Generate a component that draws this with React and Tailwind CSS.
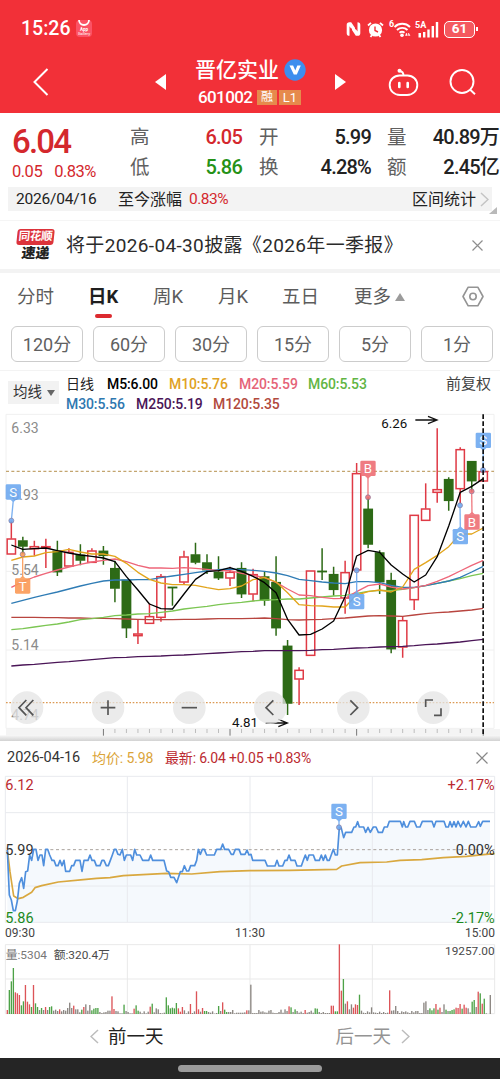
const CANDLES = [
    // [color, bodyTop, bodyBottom, high, low]
    ["r", 386, 433, 332, 433], ["g", 392, 409, 380, 432], ["r", 409, 417, 392, 437], ["r", 409, 414, 386, 474],
    ["g", 423, 486, 392, 498], ["r", 426, 469, 415, 469], ["g", 435, 451, 403, 466], ["r", 422, 458, 415, 458],
    ["g", 423, 437, 408, 464], ["g", 475, 535, 452, 577], ["g", 510, 654, 510, 684], ["r", 671, 678, 629, 702],
    ["r", 619, 641, 580, 641], ["r", 499, 623, 492, 635], ["g", 531, 533, 531, 587], ["r", 440, 517, 422, 522],
    ["g", 434, 457, 398, 463], ["g", 458, 480, 433, 492], ["g", 486, 504, 439, 510], ["r", 486, 505, 470, 528],
    ["g", 475, 552, 457, 564], ["r", 493, 553, 476, 574], ["g", 500, 571, 485, 587], ["g", 517, 654, 439, 677],
    ["g", 708, 880, 690, 915], ["r", 780, 808, 772, 885], ["r", 482, 737, 482, 737], ["g", 483, 486, 415, 510],
    ["g", 493, 539, 470, 557], ["r", 487, 565, 452, 611], ["r", 190, 481, 159, 481], ["g", 297, 403, 262, 415],
    ["g", 428, 516, 421, 552], ["g", 511, 717, 488, 730], ["r", 631, 712, 618, 743], ["r", 315, 570, 315, 600],
    ["r", 296, 332, 220, 332], ["r", 238, 248, 55, 278], ["g", 208, 272, 202, 302], ["r", 118, 237, 112, 280],
    ["g", 154, 213, 154, 245], ["r", 184, 214, 177, 214],
];

const AVERAGES = [
    { color: "#4a1557", ys: [768, 765, 763, 760, 757, 755, 752, 749, 746, 743, 742, 740, 739, 738, 736, 735, 733, 731, 729, 727, 725, 724, 722, 722, 722, 722, 721, 719, 718, 716, 714, 713, 711, 710, 709, 707, 704, 702, 699, 696, 692, 688] },
    { color: "#b8453f", ys: [622, 622, 622, 623, 623, 624, 624, 625, 625, 626, 627, 628, 629, 629, 629, 628, 628, 627, 626, 626, 626, 625, 624, 626, 629, 630, 629, 628, 626, 624, 621, 618, 617, 618, 619, 615, 611, 608, 606, 603, 600, 595] },
    { color: "#7cc653", ys: [659, 656, 651, 646, 642, 636, 629, 626, 622, 617, 615, 612, 611, 607, 603, 597, 593, 589, 584, 580, 577, 573, 570, 569, 567, 567, 564, 561, 558, 556, 550, 544, 541, 542, 538, 533, 527, 520, 513, 506, 497, 490] },
    { color: "#2f7cb5", ys: [580, 571, 562, 554, 546, 537, 528, 520, 513, 510, 510, 509, 509, 503, 498, 493, 488, 483, 479, 477, 479, 481, 484, 489, 497, 508, 512, 516, 519, 521, 515, 515, 518, 526, 532, 532, 527, 520, 513, 502, 486, 469] },
    { color: "#ee6679", ys: [532, 515, 501, 490, 480, 471, 463, 456, 451, 447, 455, 466, 474, 474, 475, 473, 475, 478, 482, 482, 490, 496, 503, 517, 537, 555, 557, 562, 566, 565, 545, 527, 522, 531, 537, 533, 526, 514, 500, 483, 466, 451] },
    { color: "#e2a51c", ys: [451, 441, 438, 428, 425, 418, 426, 432, 432, 439, 460, 487, 508, 519, 524, 524, 526, 533, 539, 536, 528, 509, 502, 516, 548, 584, 587, 588, 591, 591, 555, 545, 540, 546, 531, 478, 458, 436, 410, 372, 372, 354] },
    { color: "#000000", ys: [405, 418, 416, 414, 422, 429, 435, 439, 444, 455, 500, 540, 582, 596, 597, 552, 508, 485, 482, 473, 484, 499, 518, 548, 628, 675, 673, 657, 633, 560, 438, 421, 427, 465, 492, 516, 495, 440, 348, 247, 229, 206] },
];

const MARKERS = [
    { label: "S", color: "#6ea9f0", x: 40, y: 246, dotX: 34, dotY: 332 },
    { label: "T", color: "#fb9a56", x: 68, y: 528, dotX: 68, dotY: 433 },
    { label: "B", color: "#ee6e75", x: 1104, y: 175, dotX: 1104, dotY: 262 },
    { label: "S", color: "#6ea9f0", x: 1070, y: 575, dotX: 1070, dotY: 481 },
    { label: "S", color: "#6ea9f0", x: 1381, y: 380, dotX: 1380, dotY: 286 },
    { label: "B", color: "#ee6e75", x: 1416, y: 336, dotX: 1415, dotY: 244 },
    { label: "S", color: "#6ea9f0", x: 1450, y: 91, dotX: 1449, dotY: 180 },
];

const PRICE =
    "22,345 28,480 34,495 40,527 46,527 52,498 58,445 65,428 71,460 77,410 83,408 89,360 95,376 101,343 108,343 114,376 120,360 126,360 131,392 137,343 143,343 149,360 156,376 162,376 168,392 174,392 180,376 186,392 192,376 197,409 209,409 215,392 221,392 227,376 240,376 246,409 252,376 264,376 270,360 276,376 283,376 289,392 300,392 306,376 312,376 319,392 325,392 331,376 337,360 343,343 348,343 354,358 360,360 367,343 373,376 379,360 392,360 398,376 404,343 410,360 420,360 428,376 446,376 452,360 458,376 492,376 500,408 506,410 512,427 522,427 530,443 541,410 547,410 553,392 560,408 566,408 572,392 584,392 590,376 595,343 601,358 607,343 613,343 620,360 643,360 650,343 662,343 668,327 674,343 686,343 694,358 700,358 706,343 717,343 723,358 735,358 741,345 747,360 753,358 758,376 795,376 802,393 825,393 831,376 837,393 848,393 855,376 861,376 867,360 873,376 885,376 891,393 904,393 910,376 916,360 922,376 927,360 940,360 946,376 958,376 964,360 970,376 976,360 982,376 988,376 1000,343 1006,360 1012,360 1018,277 1024,280 1031,308 1037,292 1055,292 1062,276 1067,276 1073,260 1078,276 1091,276 1097,292 1104,277 1111,292 1120,276 1128,276 1135,292 1147,292 1153,276 1162,276 1168,259 1201,259 1207,276 1211,260 1217,276 1223,276 1230,259 1243,259 1250,276 1260,276 1267,259 1296,259 1302,276 1308,259 1332,259 1338,276 1345,276 1350,260 1356,276 1362,260 1368,276 1374,259 1382,276 1390,259 1398,276 1405,259 1412,276 1428,276 1436,260 1441,274 1448,259 1470,259";

const AVG_PRICE =
    "22,345 30,410 41,483 55,491 70,487 95,472 105,458 125,452 175,441 250,434 290,430 330,428 370,422 500,415 575,417 660,410 750,407 870,406 1010,403 1025,393 1080,383 1160,381 1200,376 1265,374 1330,368 1400,364 1450,359 1484,356";

const VOLUME = (
    "r12 g72 g98 g138 r65 r62 r57 g26 g38 r87 r37 r29 g21 r87 g32 g21 n12 g18 n12 r21 n12 g21 g23 n10 n13 n9 r14 n8 n12 n10 " +
    "n18 n34 n18 r25 n14 n14 n5 g13 r21 n29 n10 n27 g11 g16 g18 g18 n6 n3 n5 n6 n10 n10 r53 r15 n9 n8 n2 n2 g28 n9 " +
    "n6 n2 n2 r16 g26 g10 n7 n2 n8 n2 n7 r22 g31 n5 n17 n14 n3 n2 n4 g50 g26 g17 g19 g17 g33 r17 r7 r21 n11 n2 " +
    "n8 r30 n3 n8 r68 r14 n7 r18 g9 g9 n6 n4 n8 n1 n3 g24 n9 r35 g13 g6 n6 n6 n12 n2 n4 n4 n4 n4 n5 r11 " +
    "n11 n88 n3 n3 n3 n12 n7 n8 n5 n4 n10 n12 n4 n3 n3 n6 n13 n4 n14 n9 r23 g20 n6 g14 n9 n4 n7 n3 r12 n4 " +
    "n6 n10 n4 g17 g16 n6 n3 n6 n3 n3 n3 r25 r25 g8 g8 r209 r70 g105 n31 r38 n14 n29 r19 r29 r27 g58 n10 n4 n3 n8 " +
    "n5 n20 n5 n4 n3 n7 n3 n6 n3 n4 r71 n10 n11 n24 n9 n3 n8 n6 n8 n5 n3 n9 n5 n9 n9 n3 n3 n34 n38 n12 " +
    "g17 g11 g17 r30 g13 r19 n6 n29 g13 n9 g9 g12 g14 r19 r18 r30 g16 r28 r19 n17 n5 g37 g42 n21 r67 g62 r31 g46 n2 n0 n57"
).split(" ");

const VOLUME_COLORS = { r: "#dc5458", g: "#4da247", n: "#8a8580" };

const PERIODS = ["120分", "60分", "30分", "15分", "5分", "1分"];

const candleX = (i) => 34 + i * 34.53;

const StatusIcons = () => (
    <div className="flex items-center text-white">
        <svg width="15" height="16" viewBox="0 0 15 16">
            <path d="M3.500 1.200C1.600 1.200.7 2 .7 4v8.200c0 1.700.9 2.600 2.800 2.600V5.200l6.300 9.600h1.700c1.900 0 2.800-.9 2.800-2.600V4c0-2-.9-2.800-2.800-2.800v9.400L5.200 1.200z" fill="white" />
            <path d="M5.300 15V7.500M9.700 1v7.300" stroke="#f23038" strokeWidth="1.300" />
        </svg>
        <svg className="ml-[6px]" width="17" height="17" viewBox="0 0 17 17" fill="none">
            <circle cx="8.500" cy="9" r="6.600" fill="white" />
            <path d="M1 4.500 4 1.800M16 4.500l-3-2.700M3.500 16l1.500-2M13.500 16 12 14" stroke="white" strokeWidth="1.800" />
            <path d="M8 5.500V9.500l3 1.500" stroke="#f23038" strokeWidth="1.400" />
        </svg>
        <div className="ml-[5px] flex">
            <span className="-mt-[2px] w-[5px] text-[9px] leading-[10px] font-bold">6</span>
            <svg width="17" height="17" viewBox="0 0 17 17" fill="none" stroke="white">
                <path d="M.5 6a11 11 0 0 1 15.500 0M3 9a7.500 7.500 0 0 1 10.500 0M5.500 11.800a4 4 0 0 1 5 0" strokeWidth="1.900" />
                <circle cx="8" cy="14.300" r="1.800" fill="white" stroke="none" />
                <path d="m12.500 12-1 2.500h1.800zM14.500 12v2.500h1.500z" fill="white" strokeWidth=".5" />
            </svg>
        </div>
        <div className="relative ml-1 h-[17px] w-[24px]">
            <span className="absolute -top-[1px] left-0 text-[9px] leading-[10px] font-bold">5A</span>
            <svg width="24" height="17" viewBox="0 0 24 17" fill="white">
                <path d="M3.500 12H6v4.500H3.500zM8 11h2.400v5.500H8zM12.300 8.500h2.400v8h-2.400zM16.600 5H19v11.500h-2.400zM20.800 1h2.400v15.500h-2.400z" />
            </svg>
        </div>
        <div className="ml-[5px] flex h-[17px] w-[31px] items-center justify-center rounded-[5px] border border-white bg-white/20 text-[13.500px] leading-none font-bold">
            61
        </div>
        <div className="ml-px h-1 w-[2px] bg-white" />
    </div>
);

const Header = () => (
    <header className="h-[113px] bg-[#f23038] text-white">
        <div className="flex h-[58px] items-center pr-[22px] pl-[21px]">
            <span className="text-[19.500px] leading-none font-medium">15:26</span>
            <svg className="-mt-[3px] ml-[6px]" width="16" height="18" viewBox="0 0 16 18" fill="none">
                <rect y="1" width="16" height="17" rx="4" fill="#fb5265" />
                <path d="M3 1a5 5 0 0 0 10 0" stroke="white" strokeWidth="1.800" />
                <text x="8" y="12" fontSize="4.500" fontWeight="700" fill="white" textAnchor="middle">App</text>
                <text x="8" y="16" fontSize="4" fill="white" textAnchor="middle">Gallery</text>
            </svg>
            <div className="ml-auto">
                <StatusIcons />
            </div>
        </div>
        <div className="flex h-[48px] items-center">
            <svg className="ml-[32px] shrink-0" width="17" height="28" viewBox="0 0 17 28" fill="none" stroke="white" strokeWidth="2">
                <path d="M15.500 1 2.500 14l13 13" />
            </svg>
            <svg className="ml-[106px] shrink-0" width="12" height="16" viewBox="0 0 12 16" fill="white">
                <path d="M11 0v16L0 8z" />
            </svg>
            <div className="ml-[28px] w-[112px] shrink-0">
                <div className="flex h-[30px] items-center whitespace-nowrap">
                    <span className="text-[21px] leading-none font-medium">晋亿实业</span>
                    <svg className="ml-[5px]" width="22" height="22" viewBox="0 0 22 22">
                        <circle cx="11" cy="11" r="10.700" fill="#3d8eee" />
                        <path d="M5.500 6.500h3.600l2.200 5 2-5h3.500l-4 9H9.800z" fill="white" />
                    </svg>
                </div>
                <div className="flex h-[24px] items-center pl-[3px]">
                    <span className="w-[55px] pt-px text-[17px] leading-none font-medium tracking-[-0.600px]">601002</span>
                    <span className="ml-[4px] flex h-[15px] w-[20px] items-center justify-center bg-[#e68a4c] text-[12px] leading-none">融</span>
                    <span className="ml-[2px] flex h-[15px] w-[22px] items-center justify-center bg-[#e68a4c] text-[13px] leading-none">L1</span>
                </div>
            </div>
            <svg className="ml-[28px] shrink-0" width="11" height="16" viewBox="0 0 11 16" fill="white">
                <path d="M0 0v16l11-8z" />
            </svg>
            <svg className="ml-[42px] shrink-0" width="31" height="29" viewBox="0 0 31 29" fill="none" stroke="white" strokeWidth="1.900">
                <path d="M11.500 7.500h8c5.500 0 9.800 4.300 9.800 9.500 0 5.800-4.300 10-10.300 10h-7C6 27 1.700 22.800 1.700 17c0-5.200 4.300-9.500 9.800-9.500z" />
                <path d="M15.500 7.500c0-3-1-4-3.500-4.500" />
                <circle cx="11.500" cy="2.800" r="2" fill="white" stroke="none" />
                <path d="M11.300 15v4M19.700 15v4" strokeWidth="2.600" strokeLinecap="round" />
            </svg>
            <svg className="ml-[30px] shrink-0" width="28" height="28" viewBox="0 0 28 28" fill="none" stroke="white" strokeWidth="1.900">
                <circle cx="13" cy="13.500" r="11.500" />
                <path d="m21 21.500 5 4.800" />
            </svg>
        </div>
    </header>
);

const Stat = ({ label, value, width, color = "text-[#222222]" }) => (
    <div className={`flex h-[30px] items-center justify-between ${width}`}>
        <span className="pt-[3px] text-[19.500px] leading-none text-[#606060]">{label}</span>
        <span className={`pt-px text-[20px] leading-none font-medium tracking-[-0.800px] whitespace-nowrap ${color}`}>{value}</span>
    </div>
);

const Quote = () => (
    <section className="flex h-[74px] pt-[8px]">
        <div className="w-[130px] pl-[12px] text-[#d4282d]">
            <div className="pt-[4px] text-[33px] leading-[34px] font-medium tracking-[-1.800px]">6.04</div>
            <div className="mt-[3px] flex gap-[12px] text-[16.500px] leading-[20px] tracking-[-0.500px]">
                <span>0.05</span>
                <span>0.83%</span>
            </div>
        </div>
        <div>
            <Stat label="高" value="6.05" width="w-[112px]" color="text-[#d4282d]" />
            <Stat label="低" value="5.86" width="w-[112px]" color="text-[#259217]" />
        </div>
        <div className="ml-[17px]">
            <Stat label="开" value="5.99" width="w-[112px]" />
            <Stat label="换" value="4.28%" width="w-[112px]" />
        </div>
        <div className="ml-[16px]">
            <Stat label="量" value="40.89万" width="w-[112px]" />
            <Stat label="额" value="2.45亿" width="w-[112px]" />
        </div>
    </section>
);

const RangeBar = () => (
    <section className="h-[33px] px-[8px]">
        <div className="flex h-[24px] items-center bg-[#f3f3f3] pl-[8px] text-[15.500px] leading-none text-[#222222]">
            <span className="w-[81px] pt-px tracking-[-0.200px]">2026/04/16</span>
            <span className="ml-[21px] pt-px text-[16px]">至今涨幅</span>
            <span className="ml-[7px] pt-px tracking-[-0.500px] text-[#d4282d]">0.83%</span>
            <span className="ml-auto pt-px text-[16px]">区间统计</span>
            <svg className="mr-[3px] ml-[4px]" width="9" height="15" viewBox="0 0 9 15" fill="none" stroke="#c4c4c4" strokeWidth="1.500">
                <path d="m1 1 7 6.500L1 14" />
            </svg>
        </div>
        <svg className="-mt-[4px] -mr-[5px] ml-auto" width="8" height="7" viewBox="0 0 8 7" fill="#b9b9b9">
            <path d="M8 0v7H0z" />
        </svg>
    </section>
);

const News = () => (
    <section className="h-[53px] border-t border-b-[4px] border-[#f5f5f5] border-b-[#f3f3f3]">
        <div className="flex h-[48px] items-center">
            <div className="ml-[17px] w-[37px] shrink-0 text-center font-bold whitespace-nowrap">
                <div className="h-[16px] -skew-x-6 rounded-[3px] bg-[#dc333b] text-[11.500px] leading-[15px] tracking-[-0.300px] text-white">同花顺</div>
                <div className="h-[17px] -skew-x-6 text-[14px] leading-[17px] font-black text-[#222222]">速递</div>
            </div>
            <span className="ml-[12px] text-[19px] leading-none tracking-[0.350px] whitespace-nowrap text-[#2b2b2b]">将于2026-04-30披露《2026年一季报》</span>
            <svg className="mr-[17px] ml-auto" width="11" height="11" viewBox="0 0 11 11" stroke="#8e8e8e" strokeWidth="1.200">
                <path d="m.5.5 10 10M10.500.5l-10 10" />
            </svg>
        </div>
    </section>
);

const Tabs = () => (
    <nav className="flex h-[53px] pt-[12px] text-[18.500px] leading-[24px] text-[#5c5c5c]">
        <span className="ml-[17px] w-[71px]">分时</span>
        <span className="w-[65px] font-bold text-[#1f1f1f]">
            日K
            <span className="mt-[5px] ml-[7px] block h-[4px] w-[17px] rounded-full bg-[#dc2a2f]" />
        </span>
        <span className="w-[65px]">周K</span>
        <span className="w-[64px]">月K</span>
        <span className="w-[72px]">五日</span>
        <span className="flex items-center self-start">
            更多
            <svg className="ml-[4px]" width="10" height="8" viewBox="0 0 10 8" fill="#9b9b9b">
                <path d="M5 0l5 8H0z" />
            </svg>
        </span>
        <svg className="mt-px mr-[16px] ml-auto" width="22" height="21" viewBox="0 0 22 21" fill="none" stroke="#949494" strokeWidth="1.600">
            <path d="M6.200 1.200h9.600L21 10.500l-5.200 9.300H6.200L1 10.500z" strokeLinejoin="round" />
            <circle cx="11" cy="10.500" r="3.200" />
        </svg>
    </nav>
);

const PeriodButtons = () => (
    <section className="flex h-[45px] justify-between border-b border-[#f3f3f3] pr-[7px] pl-[11px]">
        {PERIODS.map((period) => (
            <button key={period} className="h-[36px] w-[72px] rounded-[6px] border border-[#cccccc] pt-[2px] text-[18px] leading-none text-[#606060]">
                {period}
            </button>
        ))}
    </section>
);

const Legend = () => (
    <section className="flex h-[42px] text-[14px]">
        <div className="mt-[10px] ml-[8px] flex h-[23px] w-[51px] items-center gap-[5px] bg-[#f2f2f2] pl-[5px] text-[14.500px] leading-none text-[#333333]">
            <span className="pt-[2px] whitespace-nowrap">均线</span>
            <svg width="8" height="6" viewBox="0 0 8 6" fill="#666666">
                <path d="M0 0h8L4 6z" />
            </svg>
        </div>
        <div className="ml-[7px] pt-[4px] leading-[19px] font-medium whitespace-nowrap">
            <div className="flex gap-[12px]">
                <span className="w-[29px] font-normal text-[#222222]">日线</span>
                <span className="w-[50px] tracking-[-0.100px] text-black">M5:6.00</span>
                <span className="w-[58px] tracking-[-0.100px] text-[#dfa224]">M10:5.76</span>
                <span className="w-[57px] tracking-[-0.100px] text-[#e56378]">M20:5.59</span>
                <span className="tracking-[-0.100px] text-[#62b544]">M60:5.53</span>
            </div>
            <div className="flex gap-[12px] pt-px tracking-[-0.100px]">
                <span className="w-[58px] text-[#2f78b0]">M30:5.56</span>
                <span className="w-[65px] text-[#4a1557]">M250:5.19</span>
                <span className="text-[#b24a3d]">M120:5.35</span>
            </div>
        </div>
        <span className="mr-[9px] ml-auto pt-[3px] text-[15px] leading-[20px] text-[#444444]">前复权</span>
    </section>
);

const Marker = ({ label, color, x, y, dotX, dotY }) => {
    const side = dotY > y ? 1 : -1;
    return (
        <g opacity="0.9">
            <path d={`M${x} ${y + side * 24}L${dotX} ${dotY}`} stroke={color} strokeWidth="4" />
            <circle cx={dotX} cy={dotY} r="7.500" fill={color} stroke="#7b6c94" strokeWidth="2" />
            <rect x={x - 23} y={y - 23} width="46" height="46" rx="4" fill={color} />
            <path d={`M${x - 10} ${y + side * 22}h20l-10 ${side * 9}z`} fill={color} />
            <text x={x} y={y + 14} fontSize="40" fill="white" textAnchor="middle">{label}</text>
        </g>
    );
};

const RoundButton = ({ x, d }) => (
    <g fill="none" stroke="#555555" strokeWidth="5">
        <circle cx={x} cy="893" r="49" fill="#e4e4e4" fillOpacity="0.75" stroke="none" />
        <path d={d} transform={`translate(${x} 893)`} />
    </g>
);

const KlineChart = () => (
    <svg className="block" width="500" height="328" viewBox="0 9 1500 984" fill="none">
        <defs>
            <linearGradient id="edge" x1="0" x2="0" y1="0" y2="1">
                <stop offset="0" stopColor="#f6f6f6" />
                <stop offset="1" stopColor="#d2d2d2" />
            </linearGradient>
        </defs>
        <path d="M18 13H1482V955H18zM18 248H1482M18 484H1482M18 720H1482" stroke="#f0f0f0" strokeWidth="3" />
        <rect x="18" y="957" width="1482" height="21" fill="#f4f4f4" />
        <rect y="976" width="1500" height="17" fill="url(#edge)" />
        {CANDLES.map((_, i) => i >= 8 && (
            <path key={i} d={`M${candleX(i)} 957v${i % 11 === 8 ? 20 : 12}`} stroke={i % 11 === 8 ? "#777777" : "#bdbdbd"} strokeWidth="3" />
        ))}
        <g fontSize="42" fill="#8b8b8b">
            <text x="34" y="69">6.33</text>
            <text x="34" y="271">5.93</text>
            <text x="34" y="496">5.54</text>
            <text x="34" y="719">5.14</text>
            <text x="34" y="929">4.74</text>
        </g>
        <path d="M18 184H1482" stroke="#c3a56f" strokeWidth="3.500" strokeDasharray="9 7" />
        <path d="M18 878H1482" stroke="#dc9a55" strokeWidth="4" strokeDasharray="5 5" />
        {CANDLES.map(([color, top, bottom, high, low], i) => {
            const x = candleX(i);
            const green = color === "g";
            return (
                <g key={i} stroke={green ? "#2d6a16" : "#df3a45"} strokeWidth="4.500">
                    <path d={`M${x} ${high}V${top}M${x} ${bottom}V${low}`} />
                    <rect x={x - 12.5} y={top + 1} width="25" height={Math.max(bottom - top - 2, 1)} fill={green ? "#2d6a16" : "none"} />
                </g>
            );
        })}
        {AVERAGES.map(({ color, ys }) => (
            <polyline key={color} points={ys.map((y, i) => `${candleX(i)},${y}`).join(" ")} stroke={color} strokeWidth="4" strokeLinejoin="round" />
        ))}
        {MARKERS.map((marker) => (
            <Marker key={marker.dotX} {...marker} />
        ))}
        <path d="M1449.500 13V976" stroke="#111111" strokeWidth="5" strokeDasharray="14 7" />
        <g fontSize="40" fill="#111111">
            <text x="1144" y="55">6.26</text>
            <text x="696" y="952">4.81</text>
        </g>
        <path d="M1246 30h64M1284 19l27 11-27 11M797 939h64M835 928l27 11-27 11" stroke="#111111" strokeWidth="4" />
        <RoundButton x={81} d="M-2-23-24 0-2 23M19-23-3 0l22 23" />
        <RoundButton x={324} d="M-22 0h44M0-22v44" />
        <RoundButton x={568} d="M-23 0h46" />
        <RoundButton x={811} d="M9-22-13 0 9 22" />
        <RoundButton x={1060} d="M-9-22 13 0-9 22" />
        <RoundButton x={1300} d="M-23-2v-21h22M23 2v21H2" />
    </svg>
);

const MinuteChart = () => (
    <svg className="block overflow-visible" width="500" height="149" viewBox="0 120 1500 447" fill="none">
        <polygon points={`22,562 ${PRICE} 1470,562`} fill="#f5f9fd" />
        <path d="M16 124H1484V562H16zM16 233H1484M16 453H1484M382 124V562M750 124V562M1117 124V562" stroke="#e8eaee" strokeWidth="3" />
        <path d="M100 344H1484" stroke="#a9a29c" strokeWidth="3" strokeDasharray="9 8" />
        <polyline points={AVG_PRICE} stroke="#d9a83f" strokeWidth="5" strokeLinejoin="round" />
        <polyline points={PRICE} stroke="#4f8fdd" strokeWidth="5" strokeLinejoin="round" />
        <Marker label="S" color="#6ea9f0" x={1017} y={229} dotX={1017} dotY={277} />
        <g fontSize="43.500">
            <text x="16" y="165" fill="#bb2a30">6.12</text>
            <text x="16" y="359" fill="#333333">5.99</text>
            <text x="16" y="564" fill="#1d8a1d">5.86</text>
            <g textAnchor="end">
                <text x="1484" y="165" fill="#bb2a30">+2.17%</text>
                <text x="1484" y="359" fill="#333333">0.00%</text>
                <text x="1484" y="564" fill="#1d8a1d">-2.17%</text>
            </g>
        </g>
    </svg>
);

const VolumeChart = () => (
    <svg className="block" width="500" height="71" viewBox="0 27 1500 213" fill="none">
        <path d="M16 29H1484V236H16zM16 132H1484M382 29V236M750 29V236M1117 29V236" stroke="#e9e9e9" strokeWidth="3" />
        {VOLUME.map((bar, i) => {
            const height = Number(bar.slice(1));
            return <rect key={i} x={20 + i * 6.037} y={237 - height} width="4" height={height} fill={VOLUME_COLORS[bar[0]]} />;
        })}
        <g fill="#4a4a4a" fontSize="35.500">
            <text x="17" y="72" fill="#777777">量:5304</text>
            <text x="161" y="72">额:320.4万</text>
            <text x="1484" y="60" textAnchor="end">19257.00</text>
        </g>
    </svg>
);

const DayDetail = () => (
    <section>
        <div className="flex h-[34px] items-center pl-[7px] text-[14.500px] leading-none text-[#333333]">
            <span className="w-[85px]">2026-04-16</span>
            <span className="w-[73px] text-[14px] tracking-[-0.100px] whitespace-nowrap text-[#dba439]">均价: 5.98</span>
            <span className="text-[14px] tracking-[-0.180px] whitespace-nowrap text-[#bb2a30]">最新: 6.04 +0.05 +0.83%</span>
            <svg className="mr-[12px] ml-auto" width="12" height="12" viewBox="0 0 12 12" stroke="#888888" strokeWidth="1.200">
                <path d="m.5.5 11 11M11.500.5l-11 11" />
            </svg>
        </div>
        <MinuteChart />
        <div className="flex h-[20px] items-center justify-between px-[5px] pb-[2px] text-[12px] leading-none text-[#444444]">
            <span>09:30</span>
            <span>11:30</span>
            <span>15:00</span>
        </div>
        <VolumeChart />
    </section>
);

const DayPager = () => (
    <div className="flex h-[43px] items-center text-[18.500px] leading-none">
        <button className="ml-[90px] flex items-center gap-[9px] text-[#222222]">
            <svg width="9" height="15" viewBox="0 0 9 15" fill="none" stroke="#bcbcbc" strokeWidth="1.500">
                <path d="M8 1 1 7.500 8 14" />
            </svg>
            <span className="pt-[2px]">前一天</span>
        </button>
        <button className="mr-[90px] ml-auto flex items-center gap-[10px] text-[#949494]">
            <span className="pt-[2px]">后一天</span>
            <svg width="9" height="15" viewBox="0 0 9 15" fill="none" stroke="#bcbcbc" strokeWidth="1.500">
                <path d="m1 1 7 6.500L1 14" />
            </svg>
        </button>
    </div>
);

const App = () => {
    return (
        <div className="h-[1079px] w-[500px] overflow-hidden bg-white font-['Roboto','Noto_Sans_CJK_SC',sans-serif]">
            <Header />
            <Quote />
            <RangeBar />
            <News />
            <Tabs />
            <PeriodButtons />
            <Legend />
            <KlineChart />
            <DayDetail />
            <DayPager />
            <div className="flex h-[21px] justify-center bg-[#252525] pt-[7px]">
                <div className="h-[7px] w-[144px] rounded-full bg-[#9b9b9b]" />
            </div>
        </div>
    );
};

export default App;
